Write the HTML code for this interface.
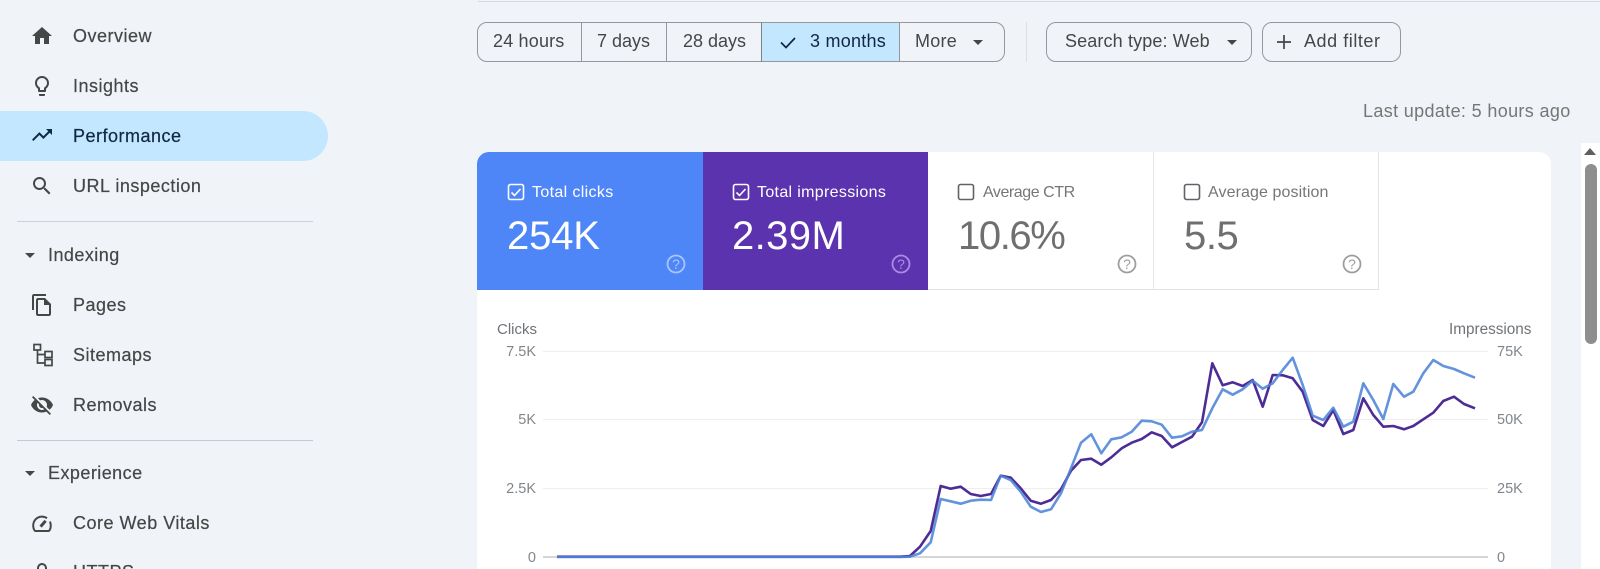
<!DOCTYPE html>
<html lang="en">
<head>
<meta charset="utf-8">
<title>Performance</title>
<style>
html,body{margin:0;padding:0;width:1600px;height:569px;overflow:hidden;background:#f0f4f9;font-family:"Liberation Sans",Arial,sans-serif;}
#p{position:relative;width:1600px;height:569px;overflow:hidden;background:#f0f4f9;}
.a{position:absolute;}
.t{position:absolute;white-space:nowrap;line-height:20px;height:20px;}
.n{font-size:18px;letter-spacing:.5px;color:#444746;left:73px;-webkit-text-stroke:.2px #444746;}
.s{font-size:18px;letter-spacing:.45px;color:#444746;left:48px;-webkit-text-stroke:.2px #444746;}
.b{font-size:18px;color:#444746;}
.i{position:absolute;left:30px;width:24px;height:24px;fill:#444746;}
.l{font-size:16px;color:#fff;letter-spacing:.35px;}
.v{font-size:40px;line-height:44px;height:44px;color:#fff;}
.g{color:#747775;}
.ax{font-size:14.5px;color:#80868b;}
svg{display:block;}
</style>
</head>
<body>
<div id="p">
  <!-- sidebar -->
  <div class="a" style="left:0;top:111px;width:328px;height:50px;background:#c2e7ff;border-radius:0 25px 25px 0"></div>

  <svg class="i" style="top:24px" viewBox="0 0 24 24"><path d="M10 20v-6h4v6h5v-8h3L12 3 2 12h3v8z"/></svg>
  <div class="t n" style="top:26px">Overview</div>

  <svg class="i" style="top:74px" viewBox="0 0 24 24"><path d="M9 21c0 .55.45 1 1 1h4c.55 0 1-.45 1-1v-1H9v1zm3-19C8.14 2 5 5.14 5 9c0 2.38 1.19 4.47 3 5.74V17c0 .55.45 1 1 1h6c.55 0 1-.45 1-1v-2.26c1.81-1.27 3-3.36 3-5.74 0-3.86-3.14-7-7-7zm2.85 11.1l-.85.6V16h-4v-2.3l-.85-.6C7.8 12.16 7 10.63 7 9c0-2.76 2.24-5 5-5s5 2.24 5 5c0 1.63-.8 3.16-2.15 4.1z"/></svg>
  <div class="t n" style="top:76px">Insights</div>

  <svg class="i" style="top:123px;fill:#0f2a47" viewBox="0 0 24 24"><path d="M16 6l2.29 2.29-4.88 4.88-4-4L2 16.59 3.41 18l6-6 4 4 6.3-6.29L22 12V6z"/></svg>
  <div class="t n" style="top:126px;color:#12263f;-webkit-text-stroke:.2px #12263f">Performance</div>

  <svg class="i" style="top:174px" viewBox="0 0 24 24"><path d="M15.5 14h-.79l-.28-.27C15.41 12.59 16 11.11 16 9.5 16 5.91 13.09 3 9.5 3S3 5.91 3 9.5 5.91 16 9.5 16c1.61 0 3.09-.59 4.23-1.57l.27.28v.79l5 4.99L20.49 19l-4.99-5zm-6 0C7.01 14 5 11.99 5 9.5S7.01 5 9.5 5 14 7.01 14 9.5 11.99 14 9.5 14z"/></svg>
  <div class="t n" style="top:176px">URL inspection</div>

  <div class="a" style="left:17px;top:221px;width:296px;height:1px;background:#ccd0d8"></div>

  <div class="a" style="left:25px;top:253px;width:0;height:0;border-left:5px solid transparent;border-right:5px solid transparent;border-top:5px solid #444746"></div>
  <div class="t s" style="top:245px">Indexing</div>

  <svg class="i" style="top:293px" viewBox="0 0 24 24"><path d="M16 1H4c-1.1 0-2 .9-2 2v14h2V3h12V1zm-1 4H8c-1.1 0-1.99.9-1.99 2L6 21c0 1.1.89 2 1.99 2H19c1.1 0 2-.9 2-2V11l-6-6zM8 21V7h6v5h5v9H8z"/></svg>
  <div class="t n" style="top:295px">Pages</div>

  <svg class="a" style="left:30px;top:343px;width:24px;height:24px" viewBox="0 0 24 24" fill="none" stroke="#444746" stroke-width="1.7"><rect x="4" y="1.500" width="6.500" height="5.500"/><rect x="15" y="8.500" width="7" height="6"/><rect x="15" y="16.500" width="7" height="6"/><path d="M7.500 7v13h7.500M7.500 11.500h7.500"/></svg>
  <div class="t n" style="top:345px">Sitemaps</div>

  <svg class="i" style="top:393px" viewBox="0 0 24 24"><path d="M12 7c2.76 0 5 2.24 5 5 0 .65-.13 1.26-.36 1.83l2.92 2.92c1.51-1.26 2.7-2.89 3.43-4.75-1.73-4.39-6-7.5-11-7.5-1.4 0-2.74.25-3.98.7l2.16 2.16C10.74 7.13 11.35 7 12 7zM2 4.27l2.28 2.28.46.46C3.08 8.3 1.78 10.02 1 12c1.73 4.39 6 7.5 11 7.5 1.55 0 3.03-.3 4.38-.84l.42.42L19.73 22 21 20.73 3.27 3 2 4.27zM7.53 9.8l1.55 1.55c-.05.21-.08.43-.08.65 0 1.66 1.34 3 3 3 .22 0 .44-.03.65-.08l1.55 1.55c-.67.33-1.41.53-2.2.53-2.76 0-5-2.24-5-5 0-.79.2-1.53.53-2.2z"/></svg>
  <div class="t n" style="top:395px">Removals</div>

  <div class="a" style="left:17px;top:440px;width:296px;height:1px;background:#c4c9d1"></div>

  <div class="a" style="left:25px;top:471px;width:0;height:0;border-left:5px solid transparent;border-right:5px solid transparent;border-top:5px solid #444746"></div>
  <div class="t s" style="top:463px">Experience</div>

  <svg class="a" style="left:30px;top:511px;width:24px;height:24px" viewBox="0 0 24 24" fill="none" stroke="#444746" stroke-width="2"><path d="M17 7.200C15.600 6.200 14 5.600 12 5.600 7 5.600 3.200 9.600 3.200 14.600c0 1.700.4 3.200 1.200 4.600.3.500.7.800 1.300.800h12.600c.6 0 1-.3 1.300-.800.8-1.400 1.200-2.900 1.200-4.600 0-1.500-.3-2.800-.9-4"/><path d="M10.600 15.600l5-5.800" stroke-width="3"/></svg>
  <div class="t n" style="top:513px">Core Web Vitals</div>

  <svg class="a" style="left:30px;top:559px;width:24px;height:24px" viewBox="0 0 24 24" fill="none" stroke="#444746" stroke-width="2"><path d="M8 12V9a4 4 0 0 1 8 0v3"/><rect x="6" y="12" width="12" height="9"/></svg>
  <div class="t n" style="top:562px">HTTPS</div>

  <!-- top rule -->
  <div class="a" style="left:478px;top:1px;width:1122px;height:1px;background:#d5d8de"></div>

  <!-- date group -->
  <div class="a" style="left:477px;top:22px;width:528px;height:40px;box-sizing:border-box;border:1px solid #94989e;border-radius:10px"></div>
  <div class="a" style="left:762px;top:23px;width:137px;height:38px;background:#c2e7ff"></div>
  <div class="a" style="left:581px;top:22px;width:1px;height:40px;background:#94989e"></div>
  <div class="a" style="left:666px;top:22px;width:1px;height:40px;background:#94989e"></div>
  <div class="a" style="left:761px;top:22px;width:1px;height:40px;background:#7d8288"></div>
  <div class="a" style="left:899px;top:22px;width:1px;height:40px;background:#94989e"></div>
  <div class="t b" style="left:493px;top:31px;letter-spacing:.18px">24 hours</div>
  <div class="t b" style="left:597px;top:31px">7 days</div>
  <div class="t b" style="left:683px;top:31px">28 days</div>
  <svg class="a" style="left:778px;top:33px;width:20px;height:18px" viewBox="0 0 20 18" fill="none" stroke="#12263f" stroke-width="1.700"><path d="M3 9.500l5 5 9-9.500"/></svg>
  <div class="t b" style="left:810px;top:31px;color:#12263f;letter-spacing:.25px">3 months</div>
  <div class="t b" style="left:915px;top:31px;letter-spacing:.25px">More</div>
  <div class="a" style="left:973px;top:40px;width:0;height:0;border-left:5px solid transparent;border-right:5px solid transparent;border-top:5px solid #444746"></div>

  <div class="a" style="left:1026px;top:22px;width:1px;height:40px;background:#dcdfe4"></div>

  <div class="a" style="left:1046px;top:22px;width:206px;height:40px;box-sizing:border-box;border:1px solid #94989e;border-radius:10px"></div>
  <div class="t b" style="left:1065px;top:31px;letter-spacing:.13px">Search type: Web</div>
  <div class="a" style="left:1227px;top:40px;width:0;height:0;border-left:5px solid transparent;border-right:5px solid transparent;border-top:5px solid #444746"></div>

  <div class="a" style="left:1262px;top:22px;width:139px;height:40px;box-sizing:border-box;border:1px solid #94989e;border-radius:10px"></div>
  <svg class="a" style="left:1275px;top:33px;width:18px;height:18px" viewBox="0 0 18 18" stroke="#444746" stroke-width="1.700"><path d="M9 2v14M2 9h14"/></svg>
  <div class="t b" style="left:1304px;top:31px;letter-spacing:.55px">Add filter</div>

  <div class="t" style="left:1363px;top:101px;font-size:18px;color:#747775;letter-spacing:.35px">Last update: 5 hours ago</div>

  <!-- scrollbar -->
  <div class="a" style="left:1581px;top:143px;width:19px;height:426px;background:#fff"></div>
  <div class="a" style="left:1584px;top:148px;width:0;height:0;border-left:6.500px solid transparent;border-right:6.500px solid transparent;border-bottom:7px solid #5f5f5f"></div>
  <div class="a" style="left:1585px;top:164px;width:12px;height:180px;background:#8e8e8e;border-radius:6px"></div>

  <!-- card -->
  <div class="a" style="left:477px;top:152px;width:1074px;height:417px;background:#fff;border-radius:12px 12px 0 0"></div>
  <div class="a" style="left:477px;top:152px;width:226px;height:138px;background:#4f86f7;border-radius:12px 0 0 0"></div>
  <div class="a" style="left:703px;top:152px;width:225px;height:138px;background:#5c33ae"></div>
  <div class="a" style="left:928px;top:289px;width:451px;height:1px;background:#e3e3e3"></div>
  <div class="a" style="left:1153px;top:152px;width:1px;height:137px;background:#e8e8e8"></div>
  <div class="a" style="left:1378px;top:152px;width:1px;height:138px;background:#e3e3e3"></div>

  <svg class="a" style="left:507px;top:183px;width:18px;height:18px" viewBox="0 0 18 18" fill="none" stroke="#fff" stroke-width="1.600"><rect x="1.500" y="1.500" width="15" height="15" rx="2"/><path d="M4.500 9.500l3 3 6-6.500"/></svg>
  <div class="t l" style="left:532px;top:183px">Total clicks</div>
  <div class="t v" style="left:507px;top:214px;letter-spacing:-.15px">254K</div>
  <svg class="a" style="left:666px;top:254px;width:20px;height:20px" viewBox="0 0 20 20"><circle cx="10" cy="10" r="8.500" fill="none" stroke="#a9c6fb" stroke-width="1.800"/><text x="10" y="15" text-anchor="middle" font-family="Liberation Sans" font-size="14" fill="#a9c6fb">?</text></svg>

  <svg class="a" style="left:732px;top:183px;width:18px;height:18px" viewBox="0 0 18 18" fill="none" stroke="#fff" stroke-width="1.600"><rect x="1.500" y="1.500" width="15" height="15" rx="2"/><path d="M4.500 9.500l3 3 6-6.500"/></svg>
  <div class="t l" style="left:757px;top:183px;letter-spacing:.33px">Total impressions</div>
  <div class="t v" style="left:732px;top:214px;letter-spacing:.4px">2.39M</div>
  <svg class="a" style="left:891px;top:254px;width:20px;height:20px" viewBox="0 0 20 20"><circle cx="10" cy="10" r="8.500" fill="none" stroke="#ab8be4" stroke-width="1.800"/><text x="10" y="15" text-anchor="middle" font-family="Liberation Sans" font-size="14" fill="#ab8be4">?</text></svg>

  <svg class="a" style="left:957px;top:183px;width:18px;height:18px" viewBox="0 0 18 18" fill="none" stroke="#5f6368" stroke-width="1.600"><rect x="1.500" y="1.500" width="15" height="15" rx="2"/></svg>
  <div class="t l g" style="left:983px;top:183px;letter-spacing:-.45px">Average CTR</div>
  <div class="t v g" style="left:958px;top:214px;color:#6f6f6f;letter-spacing:-1.400px">10.6%</div>
  <svg class="a" style="left:1117px;top:254px;width:20px;height:20px" viewBox="0 0 20 20"><circle cx="10" cy="10" r="8.500" fill="none" stroke="#9e9e9e" stroke-width="1.800"/><text x="10" y="15" text-anchor="middle" font-family="Liberation Sans" font-size="14" fill="#9e9e9e">?</text></svg>

  <svg class="a" style="left:1183px;top:183px;width:18px;height:18px" viewBox="0 0 18 18" fill="none" stroke="#5f6368" stroke-width="1.600"><rect x="1.500" y="1.500" width="15" height="15" rx="2"/></svg>
  <div class="t l g" style="left:1208px;top:183px;letter-spacing:.1px">Average position</div>
  <div class="t v g" style="left:1184px;top:214px;color:#6f6f6f;letter-spacing:-.4px">5.5</div>
  <svg class="a" style="left:1342px;top:254px;width:20px;height:20px" viewBox="0 0 20 20"><circle cx="10" cy="10" r="8.500" fill="none" stroke="#9e9e9e" stroke-width="1.800"/><text x="10" y="15" text-anchor="middle" font-family="Liberation Sans" font-size="14" fill="#9e9e9e">?</text></svg>

  <!-- chart labels -->
  <div class="t" style="left:497px;top:320px;font-size:15px;color:#6f7377">Clicks</div>
  <div class="t" style="left:1449px;top:320px;font-size:15.300px;color:#6f7377">Impressions</div>
  <div class="t ax" style="right:1064px;top:342px">7.5K</div>
  <div class="t ax" style="right:1064px;top:410px">5K</div>
  <div class="t ax" style="right:1064px;top:479px">2.5K</div>
  <div class="t ax" style="right:1064px;top:548px">0</div>
  <div class="t ax" style="left:1497px;top:342px">75K</div>
  <div class="t ax" style="left:1497px;top:410px">50K</div>
  <div class="t ax" style="left:1497px;top:479px">25K</div>
  <div class="t ax" style="left:1497px;top:548px">0</div>

  <!-- chart -->
  <svg class="a" style="left:0;top:0;width:1600px;height:569px" viewBox="0 0 1600 569" fill="none">
    <path d="M543 351.500H1488M543 419.500H1488M543 488.500H1488" stroke="#eeeeee" stroke-width="1"/>
    <path d="M543 557H1488" stroke="#c8c8c8" stroke-width="1.500"/>
    <polyline stroke="#4e2c96" stroke-width="2.600" stroke-linejoin="round" points="557,556.700 900,556.700 910,556 920,546.700 930.700,531 940.700,486 950.700,488.700 960.700,486.700 970.700,494 980.700,496 991,494 1000.700,475.700 1010.700,477.700 1020.700,488.300 1030.700,500.700 1041,503.700 1051,500 1061,489.300 1071,470.700 1081,460 1091.300,458.700 1101.300,464.700 1111.300,457.300 1121.700,448.300 1131.700,442.700 1141.700,439 1151.700,432.300 1161.700,436 1172,447.300 1182,442 1192,436.700 1202,422.300 1212.300,363.300 1222.700,385.300 1232.700,382.300 1242.700,386 1252.700,380 1262.700,406.700 1272.700,375 1282.700,375.300 1292.700,378.300 1302.700,391.700 1312.700,420 1323.300,426 1333.300,410 1343.300,434 1353.300,430 1363.300,398.300 1373.300,415 1383.300,426.700 1393.300,426 1404,429.300 1413.300,426 1423.300,419.300 1433.300,412.700 1443.300,401 1454,396.700 1464,404 1475,408.300"/>
    <polyline stroke="#4e84d8" stroke-opacity=".88" stroke-width="2.600" stroke-linejoin="round" points="557,557 900,557 910,556.700 920,553.300 930.700,542.300 940.700,499 950.700,501.300 960.700,503.700 970.700,500.700 980.700,499.700 991,500 1000.700,475.700 1010.700,480 1020.700,491.700 1030.700,506.700 1041,512 1051,509.300 1061,493.300 1071,468.300 1081,442.700 1091.300,434.300 1101.300,453.300 1111.300,439.300 1121.700,437.300 1131.700,431.700 1141.700,420.700 1151.700,421.300 1161.700,424.700 1172,437.700 1182,436.300 1192,431.700 1202,430 1212.300,408.300 1222.700,389.300 1232.700,394.700 1242.700,389.300 1252.700,380.700 1262.700,388.700 1272.700,383.300 1282.700,370 1292.700,357.700 1302.700,385 1312.700,415.700 1323.300,420 1333.300,407.700 1343.300,426.700 1353.300,421.700 1363.300,383.300 1373.300,400 1383.300,419 1393.300,384 1404,396.700 1413.300,391.700 1423.300,373.300 1433.300,360 1443.300,366 1454,369 1464,373.300 1475,377.700"/>
  </svg>
</div>
</body>
</html>
